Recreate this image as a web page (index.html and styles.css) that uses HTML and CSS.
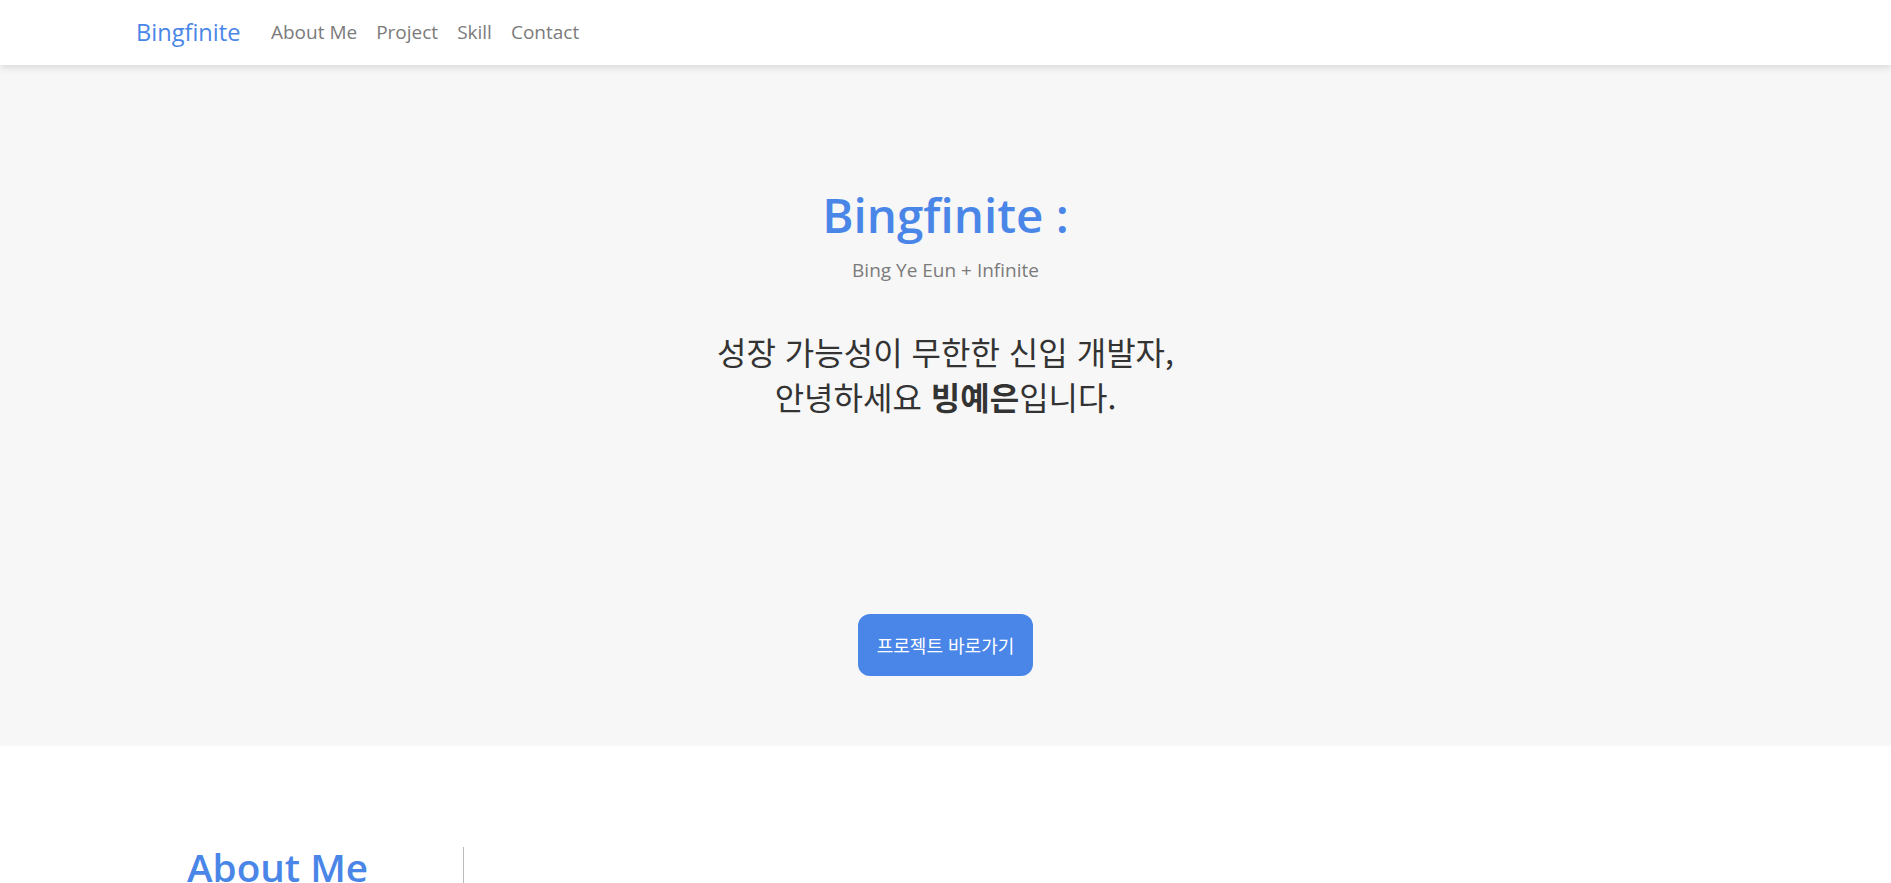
FILE: index.html
```html
<!DOCTYPE html>
<html lang="ko">
<head>
<meta charset="utf-8">
<title>Bingfinite</title>
<link rel="stylesheet" href="styles.css">
</head>
<body>
<header class="navbar">
  <a class="brand" href="#">Bingfinite</a>
  <nav class="nav">
    <a class="nav-link" href="#about">About Me</a>
    <a class="nav-link" href="#project">Project</a>
    <a class="nav-link" href="#skill">Skill</a>
    <a class="nav-link" href="#contact">Contact</a>
  </nav>
</header>
<section class="hero">
  <h1 class="hero-title">Bingfinite :</h1>
  <p class="hero-sub">Bing Ye Eun + Infinite</p>
  <p class="hero-intro">성장 가능성이 무한한 신입 개발자,<br>안녕하세요 <strong>빙예은</strong>입니다.</p>
  <a class="hero-btn" href="#project">프로젝트 바로가기</a>
</section>
<section class="about" id="about">
  <div class="about-row">
    <h2 class="about-title">About Me</h2>
    <div class="about-body"></div>
  </div>
</section>
</body>
</html>
```
FILE: styles.css
```css
* { box-sizing: border-box; }
html, body { margin: 0; padding: 0; }
body {
  font-family: "Open Sans", "Noto Sans CJK KR", sans-serif;
  color: #333;
  background: #fff;
}
a { text-decoration: none; }

.navbar {
  position: relative;
  z-index: 2;
  height: 65px;
  display: flex;
  align-items: center;
  padding-left: 136px;
  background: #fff;
  box-shadow: 0 2px 8px rgba(0, 0, 0, 0.14);
}
.brand {
  font-size: 23.6px;
  color: #4a86e8;
  margin-right: 21px;
  line-height: 1;
}
.nav { display: flex; }
.nav-link {
  font-size: 19px;
  color: #7b7b7b;
  padding: 0 9.5px;
  line-height: 1;
}

.hero {
  background: #f7f7f7;
  display: flex;
  flex-direction: column;
  align-items: center;
  padding: 121px 0 70px;
  text-align: center;
}
.hero-title {
  margin: 0;
  font-size: 47.5px;
  font-weight: 600;
  line-height: 1.2;
  color: #4a86e8;
}
.hero-sub {
  margin: 14px 0 0;
  font-size: 19px;
  line-height: 27px;
  color: #7b7b7b;
}
.hero-intro {
  margin: 45px 0 0;
  font-family: "Noto Sans CJK KR", sans-serif;
  font-size: 32px;
  line-height: 45px;
  color: #333;
}
.hero-intro strong { font-weight: 700; }
.hero-btn {
  margin-top: 195px;
  display: flex;
  align-items: center;
  justify-content: center;
  width: 175px;
  height: 62px;
  border-radius: 12px;
  background: #4a86e8;
  color: #fff;
  font-family: "Noto Sans CJK KR", sans-serif;
  font-size: 18px;
}

.about {
  padding: 101px 0 80px 187px;
}
.about-row {
  display: flex;
  min-height: 300px;
}
.about-title {
  margin: -3px 0 0;
  width: 276px;
  font-size: 38.7px;
  font-weight: 600;
  line-height: 1.2;
  color: #4a86e8;
}
.about-body {
  flex: 1;
  border-left: 1px solid #bbb;
}
```
